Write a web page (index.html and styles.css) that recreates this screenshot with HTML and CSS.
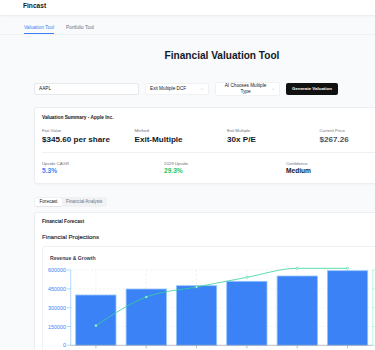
FILE: index.html
```html
<!DOCTYPE html>
<html lang="en">
<head>
  <meta charset="UTF-8" />
  <meta name="viewport" content="width=device-width, initial-scale=1.0"/>
  <title>Fincast - Financial Valuation Tool</title>
  <link rel="stylesheet" href="styles.css">
</head>
<body>
  <div class="app">
    <header class="topbar">
      <span class="brand">Fincast</span>
    </header>

    <nav class="page-nav">
      <a class="nav-tab active" href="#">Valuation Tool</a>
      <a class="nav-tab" href="#">Portfolio Tool</a>
    </nav>

    <main class="main">
      <h1>Financial Valuation Tool</h1>

      <div class="controls">
        <input class="ticker" type="text" value="AAPL" />
        <div class="select select-method">
          <span>Exit Multiple DCF</span>
          <svg class="chevron" viewBox="0 0 8 8"><path d="M2 3l2 2 2-2" /></svg>
        </div>
        <div class="select select-multiple">
          <span>AI Chooses Multiple Type</span>
          <svg class="chevron" viewBox="0 0 8 8"><path d="M2 3l2 2 2-2" /></svg>
        </div>
        <button class="generate">Generate Valuation</button>
      </div>

      <!-- Summary -->
      <section class="card summary">
        <h3 class="card-title">Valuation Summary - Apple Inc.</h3>
        <div class="stats stats-top">
          <div class="stat">
            <div class="stat-label">Fair Value</div>
            <div class="stat-value big">$345.60 per share</div>
          </div>
          <div class="stat">
            <div class="stat-label">Method</div>
            <div class="stat-value big">Exit-Multiple</div>
          </div>
          <div class="stat">
            <div class="stat-label">Exit Multiple</div>
            <div class="stat-value big">30x P/E</div>
          </div>
          <div class="stat">
            <div class="stat-label">Current Price</div>
            <div class="stat-value big muted">$267.26</div>
          </div>
        </div>
        <div class="stats stats-bottom">
          <div class="stat">
            <div class="stat-label">Upside CAGR</div>
            <div class="stat-value mid blue">5.3%</div>
          </div>
          <div class="stat">
            <div class="stat-label">2029 Upside</div>
            <div class="stat-value mid green">29.3%</div>
          </div>
          <div class="stat">
            <div class="stat-label">Confidence</div>
            <div class="stat-value mid">Medium</div>
          </div>
        </div>
      </section>

      <div class="tablist">
        <button class="tab active">Forecast</button>
        <button class="tab">Financial Analysis</button>
      </div>

      <!-- Forecast -->
      <section class="card forecast">
        <h3 class="card-title">Financial Forecast</h3>
        <h2 class="section-title">Financial Projections</h2>

        <div class="chart-card">
          <h4 class="chart-title">Revenue &amp; Growth</h4>
          <svg class="chart" width="344" height="100" viewBox="0 0 344 100">
            <g class="grid">
              <line x1="20.7" y1="6" x2="322.7" y2="6" />
              <line x1="20.7" y1="24.8" x2="322.7" y2="24.8" />
              <line x1="20.7" y1="43.7" x2="322.7" y2="43.7" />
              <line x1="20.7" y1="62.5" x2="322.7" y2="62.5" />
              <line x1="45.9" y1="6" x2="45.9" y2="81.3" />
              <line x1="96.2" y1="6" x2="96.2" y2="81.3" />
              <line x1="146.5" y1="6" x2="146.5" y2="81.3" />
              <line x1="196.9" y1="6" x2="196.9" y2="81.3" />
              <line x1="247.2" y1="6" x2="247.2" y2="81.3" />
              <line x1="297.5" y1="6" x2="297.5" y2="81.3" />
            </g>

            <g class="bars">
              <rect x="25.7" y="31" width="40.3" height="50.3" />
              <rect x="76.1" y="25" width="40.3" height="56.3" />
              <rect x="126.4" y="21.7" width="40.3" height="59.6" />
              <rect x="176.7" y="17.3" width="40.3" height="64" />
              <rect x="227.1" y="12" width="40.3" height="69.3" />
              <rect x="277.4" y="6.7" width="40.3" height="74.6" />
            </g>

            <g class="axis-left">
              <line x1="20.7" y1="6" x2="20.7" y2="81.3" />
              <line x1="16.7" y1="6" x2="20.7" y2="6" />
              <line x1="16.7" y1="24.8" x2="20.7" y2="24.8" />
              <line x1="16.7" y1="43.7" x2="20.7" y2="43.7" />
              <line x1="16.7" y1="62.5" x2="20.7" y2="62.5" />
              <line x1="16.7" y1="81.3" x2="20.7" y2="81.3" />
              <text x="16" y="8">600000</text>
              <text x="16" y="26.8">450000</text>
              <text x="16" y="45.7">300000</text>
              <text x="16" y="64.5">150000</text>
              <text x="16" y="83.3">0</text>
            </g>

            <g class="axis-right">
              <line x1="322.7" y1="6" x2="322.7" y2="81.3" />
              <line x1="322.7" y1="6" x2="326.7" y2="6" />
              <line x1="322.7" y1="24.8" x2="326.7" y2="24.8" />
              <line x1="322.7" y1="43.7" x2="326.7" y2="43.7" />
              <line x1="322.7" y1="62.5" x2="326.7" y2="62.5" />
              <line x1="322.7" y1="81.3" x2="326.7" y2="81.3" />
            </g>

            <g class="axis-bottom">
              <line x1="20.7" y1="81.3" x2="322.7" y2="81.3" />
              <line x1="45.9" y1="81.3" x2="45.9" y2="84.3" />
              <line x1="96.2" y1="81.3" x2="96.2" y2="84.3" />
              <line x1="146.5" y1="81.3" x2="146.5" y2="84.3" />
              <line x1="196.9" y1="81.3" x2="196.9" y2="84.3" />
              <line x1="247.2" y1="81.3" x2="247.2" y2="84.3" />
              <line x1="297.5" y1="81.3" x2="297.5" y2="84.3" />
              <text x="45.9" y="89.5">2024</text>
              <text x="96.2" y="89.5">2025</text>
              <text x="146.5" y="89.5">2026</text>
              <text x="196.9" y="89.5">2027</text>
              <text x="247.2" y="89.5">2028</text>
              <text x="297.5" y="89.5">2029</text>
            </g>

            <path class="growth-line" d="M45.9 61.7 C62.68 50.54 79.42 39.48 96.2 33 C112.98 26.52 129.72 26.29 146.5 23 C163.28 19.71 180.12 16.42 196.9 13.3 C213.68 10.18 230.42 4.3 247.2 4.3 L297.5 4.3" />
            <g class="growth-dots">
              <circle cx="45.9" cy="61.7" r="1.1" />
              <circle cx="96.2" cy="33" r="1.1" />
              <circle cx="146.5" cy="23" r="1.1" />
              <circle cx="196.9" cy="13.3" r="1.1" />
              <circle cx="247.2" cy="4.3" r="1.1" />
              <circle cx="297.5" cy="4.3" r="1.1" />
            </g>
          </svg>
        </div>
      </section>
    </main>
  </div>
</body>
</html>
```

FILE: styles.css
```css
html, body {
  margin: 0;
  overflow: hidden;
}

body {
  background: #f9fafb;
  color: #111827;
  font-family: 'Liberation Sans', Arial, sans-serif;
}

.app {
  min-width: 444px;
}

/* top bar */
.topbar {
  background: #ffffff;
  height: 15px;
  border-bottom: 1px solid #eceef1;
  box-shadow: 0 1px 2px rgba(0, 0, 0, 0.03);
  padding: 0 23px;
}

.brand {
  display: block;
  padding-top: 2px;
  font-size: 6.6px;
  line-height: 8px;
  font-weight: bold;
  color: #111827;
}

.page-nav {
  display: flex;
  gap: 12px;
  padding: 9px 24px 0;
  border-bottom: 1px solid #eef0f3;
}

.nav-tab {
  font-size: 4.85px;
  line-height: 6px;
  padding-bottom: 2px;
  color: #6b7280;
  text-decoration: none;
  border-bottom: 1px solid transparent;
}

.nav-tab.active {
  color: #3b82f6;
  border-bottom-color: #3b82f6;
}

/* main */
.main {
  padding: 0 34px;
}

h1 {
  margin: 14.7px 0 0;
  text-align: center;
  font-size: 10.1px;
  line-height: 12px;
  font-weight: bold;
  color: #111827;
}

.controls {
  display: flex;
  align-items: center;
  gap: 6px;
  margin-top: 20px;
  height: 14px;
}

.ticker {
  box-sizing: border-box;
  width: 105px;
  height: 12px;
  padding: 0 4px;
  font-family: inherit;
  font-size: 4.7px;
  color: #111827;
  background: #ffffff;
  border: 1px solid #e6e8ec;
  border-radius: 2px;
  outline: none;
}

.select {
  box-sizing: border-box;
  display: flex;
  align-items: center;
  justify-content: space-between;
  background: #ffffff;
  border: 1px solid #f0f1f3;
  border-radius: 2px;
  padding: 0 4px;
  font-size: 4.7px;
  color: #111827;
}

.select-method {
  width: 64px;
  height: 12px;
}

.select-multiple {
  width: 65px;
  height: 14px;
}

.select-multiple span {
  flex: 1;
  text-align: center;
  line-height: 5.5px;
  padding: 0 2px;
}

.chevron {
  width: 4px;
  height: 4px;
  flex: none;
}

.chevron path {
  fill: none;
  stroke: #9ca3af;
  stroke-width: 0.8;
}

.generate {
  box-sizing: border-box;
  width: 52px;
  height: 12px;
  padding: 0;
  border: none;
  border-radius: 2px;
  background: #111111;
  color: #ffffff;
  font-family: inherit;
  font-size: 4.4px;
  font-weight: bold;
}

/* cards */
.card {
  background: #ffffff;
  border: 1px solid #eceef1;
  border-radius: 3px;
  box-shadow: 0 1px 2px rgba(0, 0, 0, 0.03);
}

.card-title {
  margin: 0;
  font-size: 4.8px;
  line-height: 6px;
  font-weight: bold;
  color: #111827;
}

.summary {
  margin-top: 11px;
  padding: 7px 7px 8px;
}

.stats {
  display: grid;
}

.stats-top {
  grid-template-columns: repeat(4, 1fr);
  column-gap: 10px;
  margin-top: 7px;
  padding-bottom: 7px;
  border-bottom: 1px solid #eef0f3;
}

.stats-bottom {
  grid-template-columns: repeat(3, 1fr);
  column-gap: 6px;
  padding-top: 8px;
}

.stat-label {
  font-size: 4.3px;
  line-height: 5px;
  color: #6b7280;
}

.stat-value {
  font-weight: bold;
  color: #111827;
}

.stat-value.big {
  margin-top: 2px;
  font-size: 8.1px;
  line-height: 10px;
}

.stat-value.mid {
  margin-top: 1.5px;
  font-size: 6.6px;
  line-height: 8px;
}

.stat-value.muted { color: #4b5563; }
.stat-value.blue { color: #3b82f6; }
.stat-value.green { color: #22c55e; }

/* tabs */
.tablist {
  display: inline-flex;
  margin-top: 13px;
  padding: 1px;
  background: #f1f2f4;
  border-radius: 2px;
}

.tab {
  height: 8px;
  padding: 0 4px;
  border: none;
  border-radius: 1.5px;
  background: transparent;
  font-family: inherit;
  font-size: 4.6px;
  line-height: 8px;
  color: #6b7280;
}

.tab.active {
  background: #ffffff;
  color: #111827;
  padding: 0 4.5px;
  box-shadow: 0 0.5px 1px rgba(0, 0, 0, 0.06);
}

.forecast {
  margin-top: 5px;
  padding: 5.5px 7px 10px;
}

.section-title {
  margin: 7.5px 0 0;
  font-size: 6.2px;
  line-height: 9px;
  font-weight: normal;
  color: #1f2937;
  -webkit-text-stroke: 0.15px #1f2937;
}

.chart-card {
  margin-top: 4.8px;
  border: 1px solid #f0f1f3;
  border-radius: 3px;
  padding: 8px 7px 10px;
}

.chart-title {
  margin: 0;
  font-size: 5.1px;
  line-height: 6px;
  font-weight: bold;
  color: #374151;
}

.chart {
  display: block;
  margin-top: 3px;
  overflow: visible;
}

.chart .grid line {
  stroke: #e5e7eb;
  stroke-width: 0.5;
  stroke-dasharray: 2 2;
}

.chart .bars rect {
  fill: #3b82f6;
  stroke: #93c5fd;
  stroke-width: 0.8;
}

.chart .axis-left line {
  stroke: #93c5fd;
  stroke-width: 0.7;
}

.chart .axis-left text {
  fill: #3b82f6;
  font-size: 5.4px;
  text-anchor: end;
}

.chart .axis-right line {
  stroke: #a7f3d0;
  stroke-width: 0.7;
}

.chart .axis-bottom line {
  stroke: #9ca3af;
  stroke-width: 0.7;
}

.chart .axis-bottom text {
  fill: #6b7280;
  font-size: 5.4px;
  text-anchor: middle;
}

.growth-line {
  fill: none;
  stroke: #34d399;
  stroke-width: 0.8;
}

.growth-dots circle {
  fill: #ffffff;
  stroke: #34d399;
  stroke-width: 0.6;
}
```
